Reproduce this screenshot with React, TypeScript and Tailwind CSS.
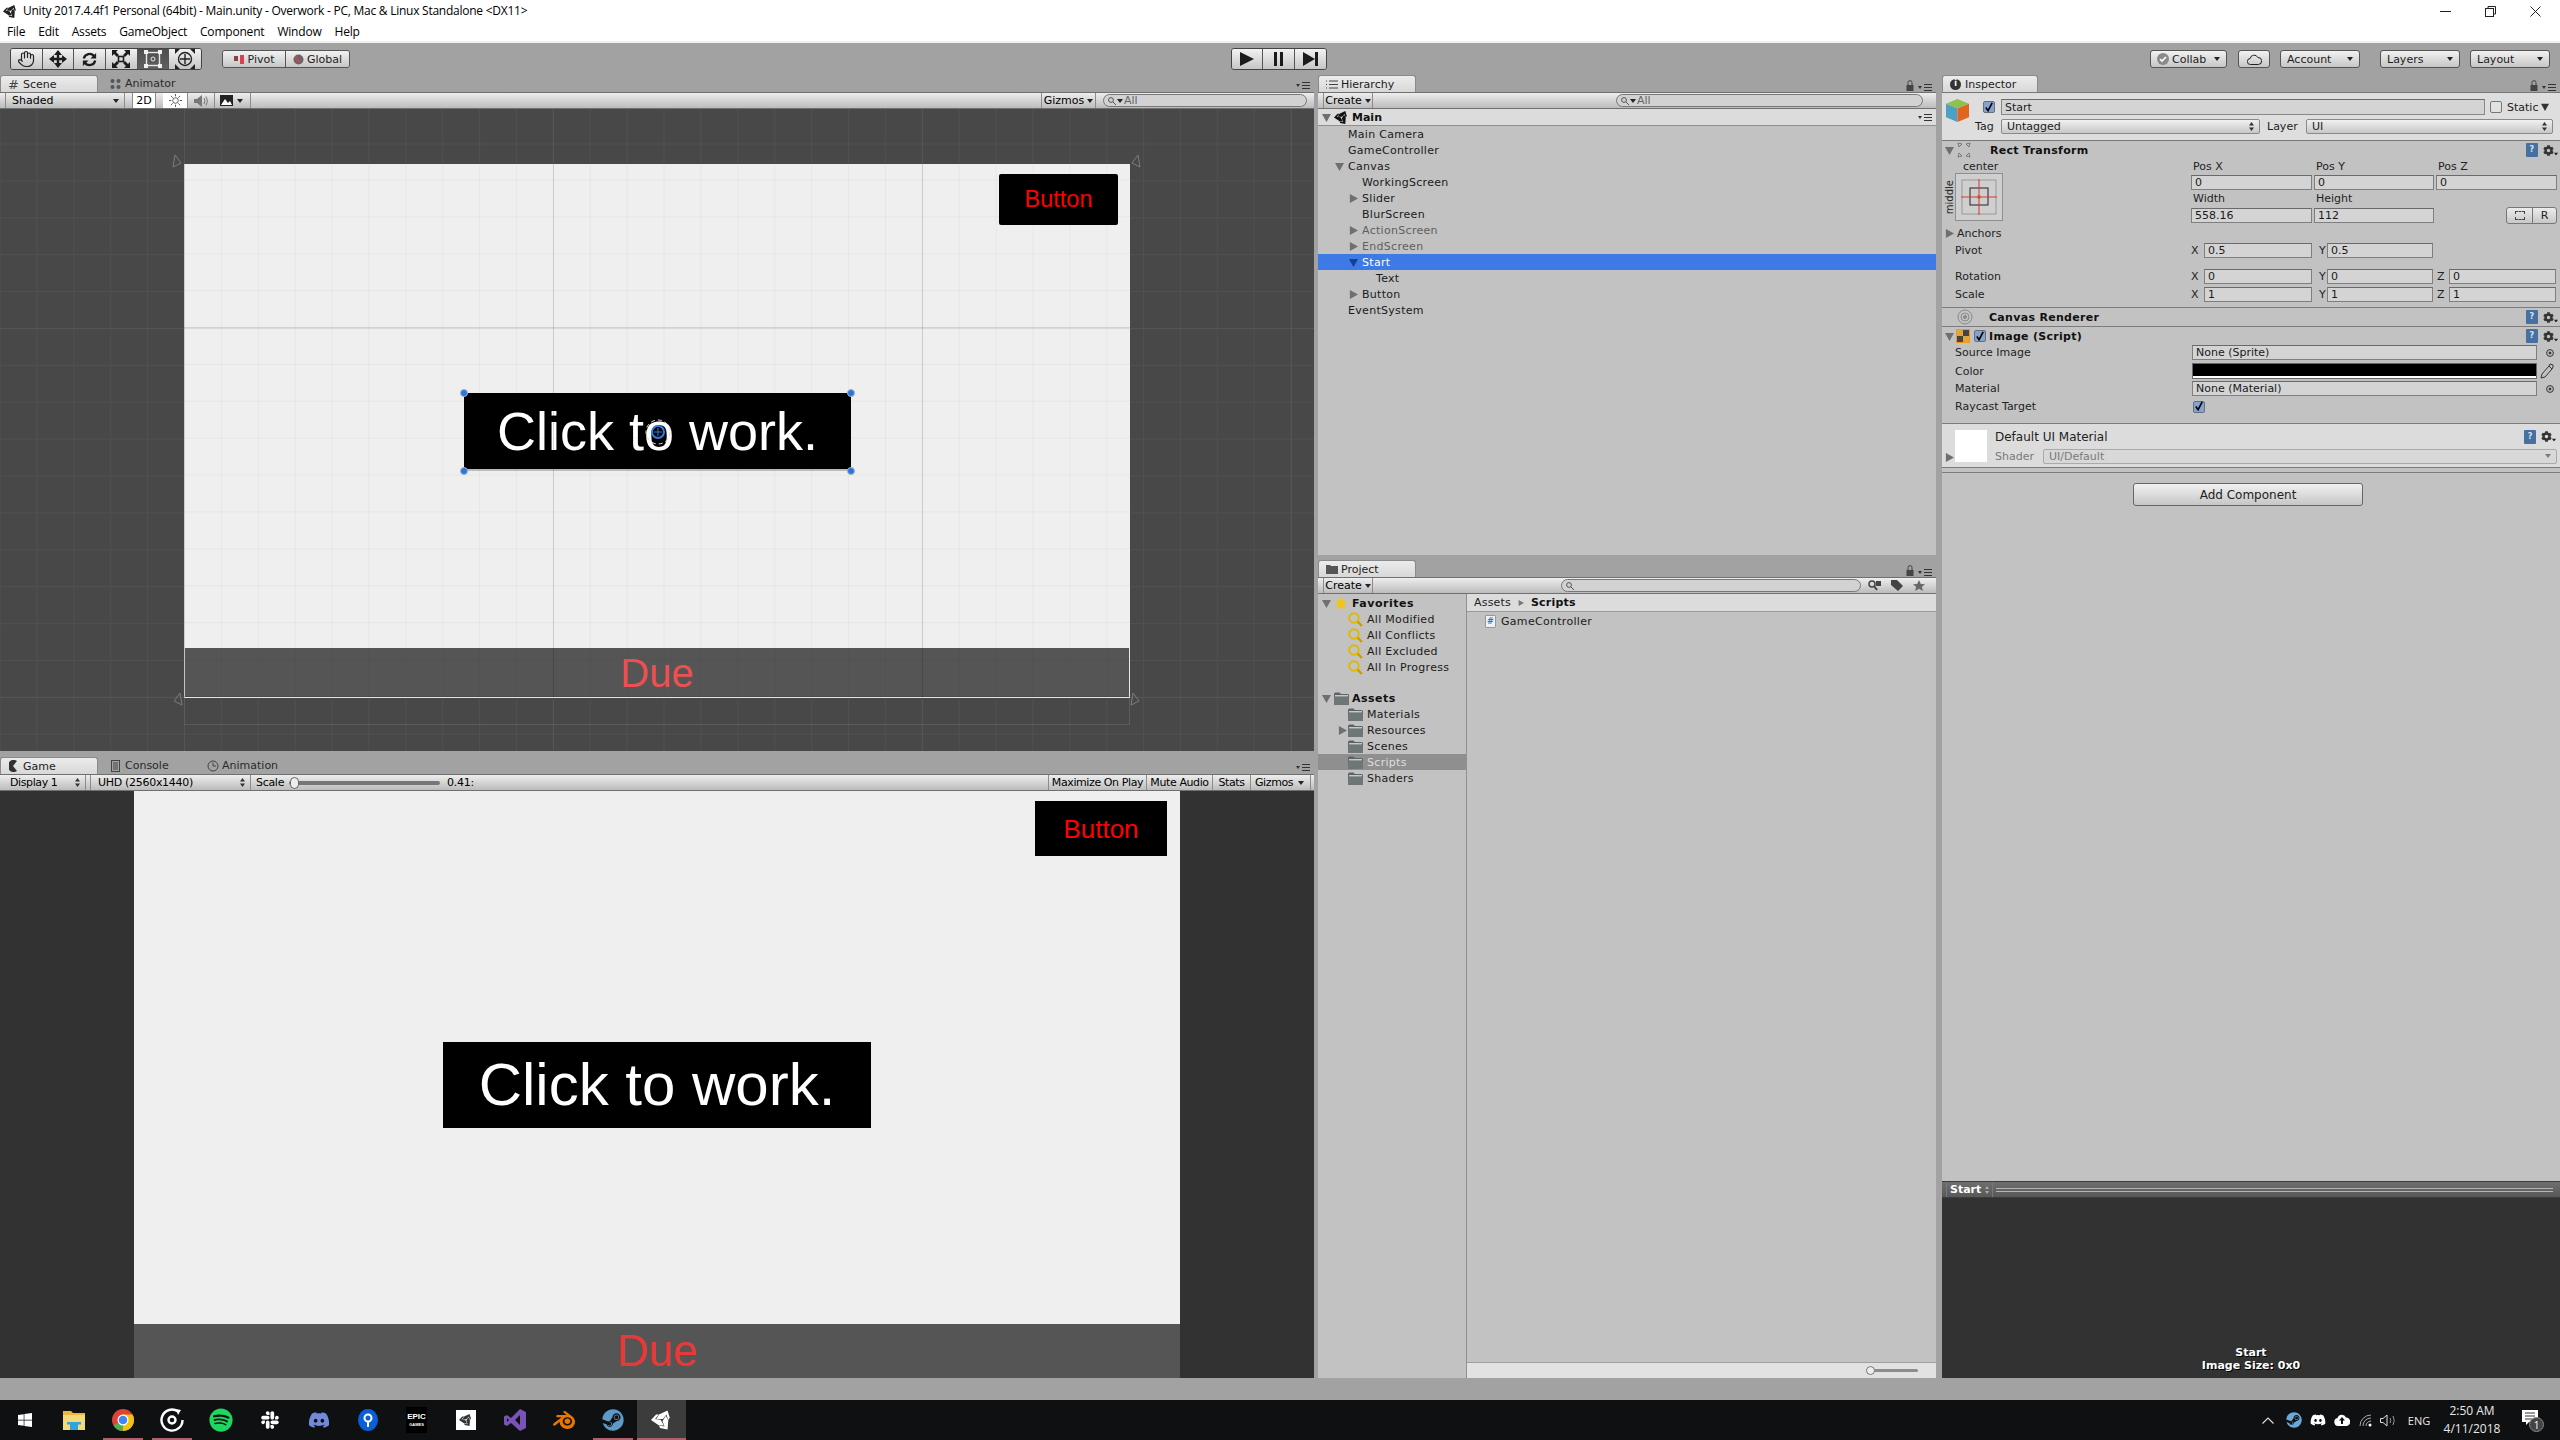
import { ReactNode } from "react";
import { FaCog, FaDiscord, FaSlack, FaSpotify, FaSteam, FaWindows } from "react-icons/fa";
import { SiBlender } from "react-icons/si";

const UnityLogo = ({ size = 16, color = "#fff" }: { size?: number; color?: string }) => (
  <svg width={size} height={size} viewBox="0 0 24 24" fill={color} className="shrink-0">
    {[0, 120, 240].map((a) => (
      <path key={a} transform={`rotate(${a} 12 12)`} d="M18 1.5L20.500 9.500L18.800 12L16.800 6L13 10.800H5.800L8.800 6Z" />
    ))}
  </svg>
);

const Arrow = ({ dir = "down", color = "#6f6f6f", size = 9 }: { dir?: "down" | "right"; color?: string; size?: number }) => (
  <svg width={size} height={size} viewBox="0 0 10 10" className="shrink-0">
    <polygon points={dir === "down" ? "0,1 10,1 5,10" : "1,0 10,5 1,10"} fill={color} />
  </svg>
);

const Caret = ({ className = "" }: { className?: string }) => (
  <svg width="6" height="4" viewBox="0 0 6 4" className={"shrink-0 " + className}>
    <polygon points="0,0 6,0 3,4" fill="#222" />
  </svg>
);

const UpDown = () => (
  <svg width="5" height="9" viewBox="0 0 5 9" className="shrink-0">
    <polygon points="2.5,0 5,3.5 0,3.5" fill="#333" />
    <polygon points="2.5,9 5,5.5 0,5.5" fill="#333" />
  </svg>
);

const PaneMenu = () => (
  <svg width="14" height="8" viewBox="0 0 14 8" className="shrink-0">
    <polygon points="0,3 4,3 2,6" fill="#333" />
    <path d="M6 1.5h8M6 4.5h8M6 7.5h8" stroke="#333" strokeWidth="1" />
  </svg>
);

const Lock = () => (
  <svg width="8" height="11" viewBox="0 0 8 11" className="shrink-0">
    <path d="M2 5V2.6a2 2 0 0 1 4 0V5" fill="none" stroke="#444" strokeWidth="1" />
    <rect x="0.5" y="5" width="7" height="6" fill="#444" />
  </svg>
);

const Tab = ({ label, icon, active, width = 98 }: { label: string; icon: ReactNode; active?: boolean; width?: number }) => (
  <div
    className={
      "flex h-[17px] items-center gap-[3px] rounded-t-[3px] pl-[6px] " +
      (active ? "bg-linear-to-b from-[#ececec] to-[#d8d8d8] border-x border-t border-[#8a8a8a]" : "")
    }
    style={{ width }}
  >
    <span className="flex w-[13px] justify-center">{icon}</span>
    <span className={active ? "text-[#1c1c1c]" : "text-[#2a2a2a]"}>{label}</span>
  </div>
);

const TabRow = ({ children, lock }: { children: ReactNode; lock?: boolean }) => (
  <div className="flex h-[17px] items-center justify-between pr-[4px]">
    <div className="flex items-center">{children}</div>
    <div className="flex items-end gap-[4px] pt-[3px]">
      {lock && <Lock />}
      <PaneMenu />
    </div>
  </div>
);

const StripButton = ({ children, className = "" }: { children: ReactNode; className?: string }) => (
  <div className={"flex h-full items-center border-r border-[#8c8c8c] " + className}>{children}</div>
);

const Strip = ({ children, className = "" }: { children: ReactNode; className?: string }) => (
  <div className={"flex h-[17px] items-stretch border-y border-[#707070] bg-linear-to-b from-[#eeeeee] to-[#bcbcbc] " + className}>
    {children}
  </div>
);

const Search = ({ width, label = true, marginLeft = 0 }: { width: number; label?: boolean; marginLeft?: number }) => (
  <div
    className="my-auto flex h-[13px] items-center gap-[1px] rounded-full border border-[#777] bg-[#d2d2d2] pl-[4px] text-[#666]"
    style={{ width, marginLeft }}
  >
    <svg width="8" height="8" viewBox="0 0 8 8" className="shrink-0">
      <circle cx="3" cy="3" r="2.4" fill="none" stroke="#555" />
      <path d="M5 5l3 3" stroke="#555" />
    </svg>
    {label && <span className="flex items-center gap-[1px]"><Caret />All</span>}
  </div>
);

const ToolGroupButton = ({ children, dark, w = 32 }: { children: ReactNode; dark?: boolean; w?: number }) => (
  <div
    className={
      "flex h-full items-center justify-center border-r border-[#555] last:border-r-0 " +
      (dark ? "bg-linear-to-b from-[#4e4e4e] to-[#606060]" : "bg-linear-to-b from-[#f2f2f2] to-[#c6c6c6]")
    }
    style={{ width: w }}
  >
    {children}
  </div>
);

const ToolbarButton = ({ children, width, marginLeft }: { children: ReactNode; width: number; marginLeft: number }) => (
  <div
    className="flex h-[18px] items-center justify-between rounded-[3px] border border-[#555] bg-linear-to-b from-[#f2f2f2] to-[#c6c6c6] px-[6px] text-[#1c1c1c]"
    style={{ width, marginLeft }}
  >
    {children}
  </div>
);

const HandIcon = () => (
  <svg width="18" height="18" viewBox="0 0 24 24" fill="none" stroke="#222" strokeWidth="1.6" strokeLinecap="round" strokeLinejoin="round">
    <path d="M18 11V6a2 2 0 0 0-4 0M14 10V4a2 2 0 0 0-4 0v2M10 10.5V6a2 2 0 0 0-4 0v8" />
    <path d="M18 8a2 2 0 1 1 4 0v6a8 8 0 0 1-8 8h-2c-2.8 0-4.5-.9-6-2.4L2.4 16a2 2 0 0 1 2.8-2.8L7 15" />
  </svg>
);

const MoveIcon = () => (
  <svg width="18" height="18" viewBox="0 0 18 18" fill="#1c1c1c">
    <polygon points="9,0 13,5 10.2,5 10.2,7.8 13,7.8 13,5 18,9 13,13 13,10.2 10.2,10.2 10.2,13 13,13 9,18 5,13 7.8,13 7.8,10.2 5,10.2 5,13 0,9 5,5 5,7.8 7.8,7.8 7.8,5 5,5" />
  </svg>
);

const RotateIcon = () => (
  <svg width="17" height="17" viewBox="0 0 18 18" fill="none" stroke="#1c1c1c" strokeWidth="2.4">
    <path d="M3 8a6 6 0 0 1 11-2" />
    <path d="M15 10a6 6 0 0 1-11 2" />
    <polygon points="16,2 16,8 10,8" fill="#1c1c1c" stroke="none" />
    <polygon points="2,16 2,10 8,10" fill="#1c1c1c" stroke="none" />
  </svg>
);

const ScaleIcon = () => (
  <svg width="18" height="18" viewBox="0 0 18 18" fill="#1c1c1c">
    <rect x="6.5" y="6.5" width="5" height="5" fill="none" stroke="#1c1c1c" strokeWidth="1.6" />
    <polygon points="0,0 6,0 4,2 7,5 5,7 2,4 0,6" />
    <polygon points="18,0 12,0 14,2 11,5 13,7 16,4 18,6" />
    <polygon points="0,18 6,18 4,16 7,13 5,11 2,14 0,12" />
    <polygon points="18,18 12,18 14,16 11,13 13,11 16,14 18,12" />
  </svg>
);

const RectToolIcon = () => (
  <svg width="18" height="18" viewBox="0 0 18 18" fill="none">
    <rect x="2.5" y="2.5" width="13" height="13" stroke="#e8e8e8" strokeWidth="1.4" />
    <rect x="0" y="0" width="4" height="4" fill="#f0f0f0" />
    <rect x="14" y="0" width="4" height="4" fill="#f0f0f0" />
    <rect x="0" y="14" width="4" height="4" fill="#f0f0f0" />
    <rect x="14" y="14" width="4" height="4" fill="#f0f0f0" />
    <circle cx="9" cy="9" r="2" stroke="#e8e8e8" />
  </svg>
);

const TransformIcon = () => (
  <svg width="20" height="20" viewBox="0 0 20 20" fill="none" stroke="#222" strokeWidth="1.4">
    <circle cx="10" cy="10" r="6.5" />
    <path d="M10 5v10M5 10h10" />
    <polygon points="0,0 5,0 0,5" fill="#222" stroke="none" />
    <polygon points="20,0 15,0 20,5" fill="#222" stroke="none" />
    <polygon points="0,20 5,20 0,15" fill="#222" stroke="none" />
    <polygon points="20,20 15,20 20,15" fill="#222" stroke="none" />
  </svg>
);

const Toolbar = () => (
  <div className="flex h-[32px] items-center bg-[#a2a2a2] pl-[10px]">
    <div className="flex h-[22px] w-[192px] overflow-hidden rounded-[3px] border border-[#444]">
      <ToolGroupButton><HandIcon /></ToolGroupButton>
      <ToolGroupButton><MoveIcon /></ToolGroupButton>
      <ToolGroupButton><RotateIcon /></ToolGroupButton>
      <ToolGroupButton><ScaleIcon /></ToolGroupButton>
      <ToolGroupButton dark><RectToolIcon /></ToolGroupButton>
      <ToolGroupButton><TransformIcon /></ToolGroupButton>
    </div>
    <div className="ml-[20px] flex h-[18px] w-[128px] overflow-hidden rounded-[3px] border border-[#555] text-[#1c1c1c]">
      <ToolGroupButton w={64}>
        <span className="flex items-center gap-[3px]">
          <svg width="11" height="9" viewBox="0 0 11 9"><rect y="1" width="4" height="5" fill="#8c3f45" /><rect x="6" width="4" height="9" fill="#d8414f" /></svg>
          Pivot
        </span>
      </ToolGroupButton>
      <ToolGroupButton w={64}>
        <span className="flex items-center gap-[3px]">
          <svg width="11" height="11" viewBox="0 0 11 11"><circle cx="5.5" cy="5.5" r="5" fill="#666" /><path d="M3 2v5h5" stroke="#d8414f" strokeWidth="1.4" fill="none" /></svg>
          Global
        </span>
      </ToolGroupButton>
    </div>
    <div className="ml-[881px] flex h-[22px] w-[96px] overflow-hidden rounded-[3px] border border-[#444]">
      <ToolGroupButton w={31}>
        <svg width="14" height="14" viewBox="0 0 14 14"><polygon points="0,0 14,7 0,14" fill="#1c1c1c" /></svg>
      </ToolGroupButton>
      <ToolGroupButton w={32}>
        <svg width="10" height="14" viewBox="0 0 10 14"><rect width="3" height="14" fill="#1c1c1c" /><rect x="6" width="3" height="14" fill="#1c1c1c" /></svg>
      </ToolGroupButton>
      <ToolGroupButton w={31}>
        <svg width="16" height="14" viewBox="0 0 16 14"><polygon points="0,0 12,7 0,14" fill="#1c1c1c" /><rect x="12" width="3" height="14" fill="#1c1c1c" /></svg>
      </ToolGroupButton>
    </div>
    <ToolbarButton width={77} marginLeft={823}>
      <span className="flex items-center gap-[3px]">
        <svg width="12" height="12" viewBox="0 0 12 12"><circle cx="6" cy="6" r="6" fill="#8a8a8a" /><path d="M3 6l2 2 4-4" stroke="#fff" strokeWidth="1.6" fill="none" /></svg>
        Collab
      </span>
      <Caret />
    </ToolbarButton>
    <div className="ml-[11px] flex h-[18px] w-[32px] items-center justify-center rounded-[3px] border border-[#555] bg-linear-to-b from-[#f2f2f2] to-[#c6c6c6]">
      <svg width="15" height="11" viewBox="0 0 15 11" fill="none" stroke="#222"><path d="M3.5 10.5a3 3 0 0 1-.3-6 4 4 0 0 1 7.6-1 3.5 3.5 0 0 1 .7 7z" /></svg>
    </div>
    <ToolbarButton width={80} marginLeft={10}>Account<Caret /></ToolbarButton>
    <ToolbarButton width={80} marginLeft={20}>Layers<Caret /></ToolbarButton>
    <ToolbarButton width={80} marginLeft={10}>Layout<Caret /></ToolbarButton>
  </div>
);

const Gizmo = ({ className, flip }: { className: string; flip?: boolean }) => (
  <svg width="11" height="14" viewBox="0 0 11 14" className={"absolute " + className}>
    <polygon points={flip ? "10,13 2,9 8,1" : "1,13 9,9 3,1"} fill="none" stroke="#7d7d7d" />
  </svg>
);

const Handle = ({ className }: { className: string }) => (
  <span className={"absolute h-[8px] w-[8px] rounded-full border border-[#9db4d0] bg-[#2b74dc] " + className} />
);

const SceneCanvas = () => (
  <div className="relative h-full bg-[#45474a]">
    <div className="absolute inset-0 bg-[#484848] bg-[linear-gradient(to_right,#555_1px,transparent_1px),linear-gradient(to_bottom,#555_1px,transparent_1px),linear-gradient(to_right,#505050_1px,transparent_1px),linear-gradient(to_bottom,#505050_1px,transparent_1px)] bg-[size:369px_369px,369px_369px,36.9px_36.9px,36.9px_36.9px] bg-[position:184px_0,0_219px,36.4px_0,0_34.5px]" />
    {/* canvas rect in world space */}
    <div className="absolute left-[184px] top-[55px] h-[534px] w-[946px] bg-[#efefef]">
      <div className="absolute left-[815px] top-[10px] flex h-[51px] w-[119px] items-center justify-center rounded-[2px] bg-black text-[23.5px] text-[#ff0000] [font-family:'Liberation_Sans',sans-serif]">
        Button
      </div>
      <div className="absolute left-[280px] top-[229px] flex h-[78px] w-[387px] items-center justify-center border-b-2 border-[#bbb] bg-black text-[54px] text-white [font-family:'Liberation_Sans',sans-serif]">
        Click to work.
      </div>
      <div className="absolute bottom-0 left-0 flex h-[50px] w-full items-center justify-center border-x border-b border-x-[#e8e8e8] border-b-white bg-[#555] text-[40px] text-[#ee4f52] [font-family:'Liberation_Sans',sans-serif]">
        Due
      </div>
      <div className="absolute inset-0 bg-[linear-gradient(to_right,rgba(0,0,0,0.12)_1px,transparent_1px),linear-gradient(to_bottom,rgba(0,0,0,0.09)_2px,transparent_2px),linear-gradient(to_right,rgba(0,0,0,0.035)_1px,transparent_1px),linear-gradient(to_bottom,rgba(0,0,0,0.035)_1px,transparent_1px)] bg-[size:369px_369px,369px_369px,36.9px_36.9px,36.9px_36.9px] bg-[position:0_0,0_163px,0_0,0_15.4px]" />
      <Handle className="left-[276px] top-[225px]" />
      <Handle className="left-[663px] top-[225px]" />
      <Handle className="left-[276px] top-[303px]" />
      <Handle className="left-[663px] top-[303px]" />
      <svg width="30" height="30" viewBox="0 0 30 30" className="absolute left-[459px] top-[253px]" fill="none">
        <circle cx="15" cy="15" r="12" stroke="#ddd" strokeWidth="1" strokeDasharray="4 3" />
        <circle cx="15" cy="15" r="6" stroke="#2f7ee0" strokeWidth="2" />
        <path d="M15 11v8M11 15h8" stroke="#2f7ee0" strokeWidth="1" />
      </svg>
    </div>
    <div className="absolute left-[184px] top-[589px] h-[27px] w-[946px] border-x border-b border-[#5c5c5c]" />
    <Gizmo className="left-[172px] top-[45px]" />
    <Gizmo className="left-[1130px] top-[45px]" flip />
    <Gizmo className="left-[172px] top-[583px]" flip />
    <Gizmo className="left-[1130px] top-[583px]" />
  </div>
);

const SceneView = () => (
  <div className="flex h-[676px] flex-col">
    <TabRow>
      <Tab active label="Scene" icon={<span className="text-[13px] leading-none text-[#444]">#</span>} />
      <div className="ml-[5px]">
        <Tab width={80} label="Animator" icon={
          <svg width="11" height="12" viewBox="0 0 11 12" fill="#555"><circle cx="2.5" cy="3" r="2" /><circle cx="8.5" cy="3" r="2" /><circle cx="2.5" cy="9" r="2" /><circle cx="8.5" cy="9" r="2" /></svg>
        } />
      </div>
    </TabRow>
    <Strip>
      <StripButton className="ml-[5px] w-[120px] justify-between border-l border-l-[#8c8c8c] pl-[6px] pr-[5px]">Shaded<Caret /></StripButton>
      <StripButton className="ml-[7px] w-[24px] justify-center border-l border-l-[#8c8c8c] bg-white">2D</StripButton>
      <StripButton className="ml-[7px] w-[25px] justify-center bg-white">
        <svg width="13" height="13" viewBox="0 0 14 14" fill="none" stroke="#555"><circle cx="7" cy="7" r="3" /><path d="M7 0v2.5M7 11.5V14M0 7h2.5M11.5 7H14M2 2l2 2M10 10l2 2M12 2l-2 2M4 10l-2 2" /></svg>
      </StripButton>
      <StripButton className="w-[27px] justify-center">
        <svg width="14" height="12" viewBox="0 0 14 12"><polygon points="0,4 3,4 8,0 8,12 3,8 0,8" fill="#777" /><path d="M10 3q2 3 0 6M12 1.5q3 4.5 0 9" stroke="#777" fill="none" /></svg>
      </StripButton>
      <StripButton className="w-[36px] justify-center gap-[4px] pr-[2px]">
        <svg width="13" height="11" viewBox="0 0 13 11"><rect width="13" height="11" fill="#222" /><polygon points="1,10 5,4 8,8 10,6 12,10" fill="#fff" /></svg>
        <Caret />
      </StripButton>
      <div className="w-[790px]" />
      <StripButton className="w-[55px] justify-center gap-[3px] border-l border-l-[#8c8c8c]">Gizmos<Caret /></StripButton>
      <Search width={204} marginLeft={7} />
    </Strip>
    <div className="min-h-0 flex-1">
      <SceneCanvas />
    </div>
  </div>
);

const GameView = () => (
  <div className="flex h-[621px] flex-col">
    <TabRow>
      <Tab active label="Game" icon={
        <svg width="9" height="12" viewBox="0 0 9 12"><path d="M8 1a6 6 0 1 0 0 10L4 6z" fill="#333" /></svg>
      } />
      <div className="ml-[5px]"><Tab width={97} label="Console" icon={
        <svg width="9" height="12" viewBox="0 0 9 12" fill="none" stroke="#444"><rect x="0.5" y="0.5" width="8" height="11" /><path d="M2 3h5M2 5h5M2 7h5M2 9h5" /></svg>
      } /></div>
      <Tab width={100} label="Animation" icon={
        <svg width="12" height="12" viewBox="0 0 12 12" fill="none" stroke="#444"><circle cx="6" cy="6" r="5" /><path d="M6 2.5V6h3" /></svg>
      } />
    </TabRow>
    <Strip>
      <StripButton className="w-[86px] justify-between pl-[10px] pr-[5px] tracking-[-0.4px]">Display 1<UpDown /></StripButton>
      <StripButton className="ml-[4px] w-[161px] justify-between border-l border-l-[#8c8c8c] pl-[7px] pr-[5px] tracking-[-0.3px]">UHD (2560x1440)<UpDown /></StripButton>
      <div className="ml-[5px] flex w-[219px] items-center tracking-[-0.3px]">
        Scale
        <div className="relative ml-[5px] h-[4px] w-[151px] rounded-full bg-[#777]">
          <span className="absolute left-[1px] top-[-4px] h-[12px] w-[9px] rounded-full border border-[#666] bg-[#eee]" />
        </div>
        <span className="ml-[7px]">0.41:</span>
      </div>
      <div className="w-[573px]" />
      <StripButton className="w-[99px] justify-center border-l border-l-[#8c8c8c] tracking-[-0.4px]">Maximize On Play</StripButton>
      <StripButton className="w-[66px] justify-center tracking-[-0.4px]">Mute Audio</StripButton>
      <StripButton className="w-[38px] justify-center tracking-[-0.4px]">Stats</StripButton>
      <StripButton className="w-[60px] justify-between pl-[4px] pr-[6px] tracking-[-0.4px]">Gizmos<Caret /></StripButton>
    </Strip>
    <div className="flex min-h-0 flex-1 justify-center bg-[#323232]">
      <div className="relative flex h-full w-[1046px] flex-col bg-[#efefef] [font-family:'Liberation_Sans',sans-serif]">
        <div className="flex justify-end pr-[13px] pt-[10px]">
          <div className="flex h-[55px] w-[132px] items-center justify-center bg-black text-[26px] text-[#ff0000]">Button</div>
        </div>
        <div className="mt-[186px] flex justify-center">
          <div className="flex h-[86px] w-[428px] items-center justify-center bg-black text-[60px] text-white">Click to work.</div>
        </div>
        <div className="mt-auto flex h-[54px] items-center justify-center bg-[#555] text-[44px] text-[#e83838]">Due</div>
      </div>
    </div>
  </div>
);

const TreeRow = ({ label, indent, arrow, muted, selected }: { label: string; indent: number; arrow?: "down" | "right"; muted?: boolean; selected?: boolean }) => (
  <div
    className={"flex h-[16px] items-center tracking-[0.3px] " + (selected ? "bg-[#3d7ae5] text-white" : muted ? "text-[#5f5f5f]" : "text-[#1a1a1a]")}
    style={{ paddingLeft: indent - 13 }}
  >
    <span className="mr-[4px] flex w-[9px] justify-center">
      {arrow && <Arrow dir={arrow} color={selected ? "#163f8c" : "#6f6f6f"} />}
    </span>
    {label}
  </div>
);

const Hierarchy = () => (
  <div className="flex h-[480px] flex-col">
    <TabRow lock>
      <Tab active label="Hierarchy" icon={
        <svg width="12" height="9" viewBox="0 0 12 9" stroke="#444"><path d="M3 1h9M3 4.5h9M3 8h9M0 1h1M0 4.5h1M0 8h1" /></svg>
      } />
    </TabRow>
    <Strip>
      <StripButton className="ml-[5px] w-[50px] justify-center gap-[3px] border-l border-l-[#8c8c8c]">Create<Caret /></StripButton>
      <Search width={307} marginLeft={243} />
    </Strip>
    <div className="min-h-0 flex-1 bg-[#c2c2c2]">
      <div className="flex h-[17px] items-center justify-between border-b border-[#8f8f8f] bg-[#dcdcdc] pl-[4px] pr-[4px] font-bold text-[#111]">
        <span className="flex items-center gap-[3px]">
          <Arrow />
          <UnityLogo size={15} color="#111" />
          Main
        </span>
        <PaneMenu />
      </div>
      <TreeRow label="Main Camera" indent={30} />
      <TreeRow label="GameController" indent={30} />
      <TreeRow label="Canvas" indent={30} arrow="down" />
      <TreeRow label="WorkingScreen" indent={44} />
      <TreeRow label="Slider" indent={44} arrow="right" />
      <TreeRow label="BlurScreen" indent={44} />
      <TreeRow label="ActionScreen" indent={44} arrow="right" muted />
      <TreeRow label="EndScreen" indent={44} arrow="right" muted />
      <TreeRow label="Start" indent={44} arrow="down" selected />
      <TreeRow label="Text" indent={58} />
      <TreeRow label="Button" indent={44} arrow="right" />
      <TreeRow label="EventSystem" indent={30} />
    </div>
  </div>
);

const Folder = () => (
  <svg width="15" height="13" viewBox="0 0 15 13" className="shrink-0">
    <path d="M0 2q0-1.5 1.5-1.5h4L7 2h6.500Q15 2 15 3.500V12q0 1-1 1H1q-1 0-1-1z" fill="#5e6466" />
    <rect x="1" y="3" width="13" height="1.5" fill="#c8c8c8" />
    <rect x="0" y="5" width="15" height="8" rx="1" fill="#6f7678" />
  </svg>
);

const SearchFolder = () => (
  <svg width="15" height="15" viewBox="0 0 15 15" fill="none" className="shrink-0">
    <circle cx="6" cy="6" r="4.8" stroke="#e0b800" strokeWidth="2" />
    <path d="M9.5 9.5L14 14" stroke="#c89f00" strokeWidth="2.4" />
  </svg>
);

const ProjectRow = ({ icon, label, active, arrow }: { icon: ReactNode; label: string; active?: boolean; arrow?: boolean }) => (
  <div className={"flex h-[16px] items-center pl-[18px] tracking-[0.3px] " + (active ? "bg-[#8f8f8f] text-[#dedede]" : "text-[#1a1a1a]")}>
    <span className="flex w-[12px] justify-center">{arrow && <Arrow dir="right" />}</span>
    <span className="flex w-[19px]">{icon}</span>
    {label}
  </div>
);

const ProjectHead = ({ icon, label }: { icon: ReactNode; label: string }) => (
  <div className="flex h-[16px] items-center gap-[3px] pl-[4px] font-bold tracking-[0.5px] text-[#111]">
    <Arrow />
    <span className="flex w-[15px]">{icon}</span>
    {label}
  </div>
);

const Project = () => (
  <div className="flex h-[818px] flex-col">
    <TabRow lock>
      <Tab active label="Project" icon={
        <svg width="12" height="10" viewBox="0 0 12 10" fill="#555"><path d="M0 1h4l1 1h7v8H0z" /></svg>
      } />
    </TabRow>
    <Strip>
      <StripButton className="ml-[5px] w-[50px] justify-center gap-[3px] border-l border-l-[#8c8c8c]">Create<Caret /></StripButton>
      <Search width={300} label={false} marginLeft={188} />
      <div className="ml-[7px] flex items-center gap-[10px]">
        <svg width="13" height="11" viewBox="0 0 13 11" fill="#444"><circle cx="4" cy="4" r="3" fill="none" stroke="#444" strokeWidth="1.5" /><path d="M6 6l3 4" stroke="#444" strokeWidth="2" /><rect x="8" y="1" width="5" height="5" /></svg>
        <svg width="12" height="11" viewBox="0 0 12 11" fill="#444"><polygon points="0,0 6,0 12,6 7,11 0,5" /></svg>
        <svg width="12" height="11" viewBox="0 0 12 11" fill="#666"><polygon points="6,0 7.8,4 12,4.2 8.8,7 10,11 6,8.8 2,11 3.2,7 0,4.2 4.2,4" /></svg>
      </div>
    </Strip>
    <div className="flex min-h-0 flex-1 bg-[#c2c2c2]">
      <div className="w-[149px] shrink-0 border-r border-[#909090] pt-[1px]">
        <ProjectHead label="Favorites" icon={
          <svg width="14" height="14" viewBox="0 0 12 12" fill="#f2c618"><polygon points="6,0 7.8,4 12,4.4 8.8,7.2 9.8,12 6,9.5 2.2,12 3.2,7.2 0,4.4 4.2,4" /></svg>
        } />
        <ProjectRow icon={<SearchFolder />} label="All Modified" />
        <ProjectRow icon={<SearchFolder />} label="All Conflicts" />
        <ProjectRow icon={<SearchFolder />} label="All Excluded" />
        <ProjectRow icon={<SearchFolder />} label="All In Progress" />
        <div className="h-[15px]" />
        <ProjectHead label="Assets" icon={<Folder />} />
        <ProjectRow icon={<Folder />} label="Materials" />
        <ProjectRow icon={<Folder />} label="Resources" arrow />
        <ProjectRow icon={<Folder />} label="Scenes" />
        <ProjectRow icon={<Folder />} label="Scripts" active />
        <ProjectRow icon={<Folder />} label="Shaders" />
      </div>
      <div className="flex min-w-0 flex-1 flex-col">
        <div className="flex h-[18px] items-center gap-[7px] border-b border-[#9a9a9a] bg-[#dcdcdc] pl-[7px] tracking-[0.2px] text-[#222]">
          Assets
          <Arrow dir="right" size={6} color="#777" />
          <span className="font-bold text-[#111]">Scripts</span>
        </div>
        <div className="flex h-[19px] items-center gap-[5px] pl-[18px] tracking-[0.3px] text-[#1a1a1a]">
          <span className="flex h-[13px] w-[11px] items-center justify-center rounded-[1px] border border-[#8a9aa8] bg-[#eef2f5] text-[8px] font-bold leading-none text-[#1f7fbf]">#</span>
          GameController
        </div>
        <div className="mt-auto flex h-[16px] items-center justify-end border-t border-[#a0a0a0] bg-[#e2e2e2] pr-[18px]">
          <div className="relative h-[3px] w-[52px] rounded-full bg-[#8d8d8d]">
            <span className="absolute left-0 top-[-3px] h-[9px] w-[9px] rounded-full border border-[#777] bg-[#eee]" />
          </div>
        </div>
      </div>
    </div>
  </div>
);

const Field = ({ value, width, className = "" }: { value: string; width: number; className?: string }) => (
  <div
    className={"flex h-[15px] shrink-0 items-center border border-[#7f7f7f] border-t-[#6a6a6a] bg-[#d4d4d4] pl-[3px] text-[#1a1a1a] " + className}
    style={{ width }}
  >
    {value}
  </div>
);

const Check = ({ className = "" }: { className?: string }) => (
  <span className={"flex h-[12px] w-[12px] shrink-0 items-center justify-center rounded-[2px] border border-[#66707c] bg-[#84a3d0] " + className}>
    <svg width="11" height="11" viewBox="0 0 11 11" fill="none"><path d="M2 5.5L4.5 9L9 0.5" stroke="#000" strokeWidth="1.8" /></svg>
  </span>
);

const CompTools = () => (
  <div className="ml-auto flex items-center gap-[5px]">
    <span className="flex h-[14px] w-[12px] items-center justify-center rounded-[1px] bg-[#46709f] text-[8px] font-bold leading-none text-[#d8e4f0]">?</span>
    <span className="flex items-end">
      <FaCog size={11} color="#333" />
      <Caret className="ml-[-1px] scale-75" />
    </span>
  </div>
);

const Vec = ({ label, y, z, h = 15, mt = 0, x = "0" }: { label: string; x?: string; y: string; z?: string; h?: number; mt?: number }) => (
  <div className="flex items-center pl-[13px] text-[#222]" style={{ height: h, marginTop: mt }}>
    <span className="w-[236px]">{label}</span>
    <span className="w-[13px]">X</span>
    <Field value={x} width={108} />
    <span className="ml-[7px] w-[8px]">Y</span>
    <Field value={y} width={106} />
    {z && <span className="ml-[4px] w-[12px]">Z</span>}
    {z && <Field value={z} width={107} />}
  </div>
);

const ImageRow = ({ label, value, dot = true, mt = 3 }: { label: string; value: string; dot?: boolean; mt?: number }) => (
  <div className="flex h-[15px] items-center pl-[13px] text-[#222]" style={{ marginTop: mt }}>
    <span className="w-[237px]">{label}</span>
    <Field value={value} width={345} />
    {dot && (
      <svg width="8" height="8" viewBox="0 0 8 8" className="ml-[9px]" fill="none" stroke="#333"><circle cx="4" cy="4" r="3.4" /><circle cx="4" cy="4" r="1" fill="#333" /></svg>
    )}
  </div>
);

const Inspector = () => (
  <div className="flex h-full flex-col">
    <TabRow lock>
      <Tab active width={96} label="Inspector" icon={
        <span className="flex h-[11px] w-[11px] items-center justify-center rounded-full bg-[#333] text-[8px] font-bold leading-none text-white">i</span>
      } />
    </TabRow>
    <div className="h-[49px] border-y border-[#777] bg-[#dedede] pt-[6px] text-[#1c1c1c]">
      <div className="flex h-[16px] items-center pl-[4px]">
        <svg width="23" height="23" viewBox="0 0 24 24" className="mt-[6px] shrink-0">
          <polygon points="12,0 24,5 12,10 0,5" fill="#8fc14e" />
          <polygon points="0,5 12,10 12,24 0,19" fill="#4e9fc4" />
          <polygon points="24,5 12,10 12,24 24,19" fill="#e2651f" />
        </svg>
        <Check className="ml-[14px]" />
        <Field value="Start" width={484} className="ml-[6px] h-[16px] border-[#888]" />
        <span className="ml-[5px] h-[12px] w-[12px] rounded-[2px] border border-[#777] bg-[#e2e2e2]" />
        <span className="ml-[5px]">Static</span>
        <span className="ml-[3px]"><Arrow size={8} color="#333" /></span>
      </div>
      <div className="mt-[3px] flex h-[16px] items-center">
        <span className="ml-[33px] w-[26px]">Tag</span>
        <div className="flex h-[15px] w-[259px] items-center justify-between rounded-[2px] border border-[#8a8a8a] bg-linear-to-b from-[#f0f0f0] to-[#c8c8c8] px-[5px]">Untagged<UpDown /></div>
        <span className="ml-[7px] w-[39px]">Layer</span>
        <div className="flex h-[15px] w-[247px] items-center justify-between rounded-[2px] border border-[#8a8a8a] bg-linear-to-b from-[#f0f0f0] to-[#c8c8c8] px-[5px]">UI<UpDown /></div>
      </div>
    </div>
    <div className="min-h-0 flex-1 bg-[#c2c2c2]">
      <div className="flex h-[18px] items-center pl-[3px] pr-[1px] font-bold tracking-[0.3px] text-[#111]">
        <Arrow />
        <svg width="16" height="16" viewBox="0 0 16 16" className="ml-[2px]" fill="none" stroke="#777"><path d="M2 1l4 1-3 3zM14 1l-4 1 3 3zM2 15l4-1-3-3zM14 15l-4-1 3-3z" /></svg>
        <span className="ml-[18px]">Rect Transform</span>
        <CompTools />
      </div>
      <div className="flex">
        <div className="w-[249px] shrink-0 text-[#222]">
          <div className="flex h-[14px] items-center pl-[21px]">center</div>
          <div className="flex items-center pl-[3px]">
            <span className="w-[10px] text-[10px] leading-none [writing-mode:vertical-rl] rotate-180">middle</span>
            <div className="flex h-[48px] w-[48px] items-center justify-center border border-[#8f8f8f] bg-[#cfcfcf]">
              <svg width="36" height="36" viewBox="0 0 36 36" fill="none">
                <rect x="1" y="1" width="34" height="34" stroke="#999" />
                <rect x="9" y="9" width="18" height="17" stroke="#222" />
                <path d="M18 0v36M0 18h36" stroke="#d33" />
                <rect x="16.5" y="16.5" width="3" height="3" fill="#a06a10" />
              </svg>
            </div>
          </div>
        </div>
        <div className="text-[#222]">
          <div className="flex h-[14px] items-center pl-[2px]">
            <span className="w-[123px]">Pos X</span><span className="w-[122px]">Pos Y</span><span>Pos Z</span>
          </div>
          <div className="mt-[2px] flex gap-[2px]">
            <Field value="0" width={121} />
            <Field value="0" width={120} />
            <Field value="0" width={121} />
          </div>
          <div className="flex h-[17px] items-center pl-[2px]">
            <span className="w-[123px]">Width</span><span>Height</span>
          </div>
          <div className="flex items-center gap-[2px]">
            <Field value="558.16" width={121} />
            <Field value="112" width={120} />
            <div className="ml-[70px] flex h-[17px] w-[51px] overflow-hidden rounded-[3px] border border-[#777] bg-linear-to-b from-[#ececec] to-[#c8c8c8]">
              <span className="flex w-[26px] items-center justify-center border-r border-[#777]">
                <span className="h-[9px] w-[10px] border border-dashed border-[#444]" />
              </span>
              <span className="flex flex-1 items-center justify-center">R</span>
            </div>
          </div>
        </div>
      </div>
      <div className="mt-[1px] flex h-[16px] items-center gap-[3px] pl-[3px] text-[#222]">
        <Arrow dir="right" /><span>Anchors</span>
      </div>
      <Vec label="Pivot" x="0.5" y="0.5" mt={2} />
      <Vec label="Rotation" y="0" z="0" mt={11} />
      <Vec label="Scale" x="1" y="1" z="1" mt={3} />
      <div className="mt-[5px] flex h-[19px] items-center border-t border-[#7c7c7c] pl-[15px] pr-[1px] font-bold tracking-[0.3px] text-[#111]">
        <svg width="16" height="16" viewBox="0 0 16 16" fill="none" stroke="#8a8a8a"><circle cx="8" cy="8" r="7" /><circle cx="8" cy="8" r="4" /><circle cx="8" cy="8" r="1.5" fill="#8a8a8a" /></svg>
        <span className="ml-[16px]">Canvas Renderer</span>
        <CompTools />
      </div>
      <div className="flex h-[19px] items-center border-t border-[#7c7c7c] pl-[3px] pr-[1px] font-bold tracking-[0.3px] text-[#111]">
        <Arrow />
        <span className="ml-[2px] grid h-[14px] w-[14px] grid-cols-2 border border-[#f09a1a]">
          <span className="bg-[#e2a43c]" /><span className="bg-[#444]" /><span className="bg-[#444]" /><span className="bg-[#e2a43c]" />
        </span>
        <Check className="ml-[4px]" />
        <span className="ml-[3px]">Image (Script)</span>
        <CompTools />
      </div>
      <ImageRow label="Source Image" value="None (Sprite)" mt={0} />
      <div className="mt-[3px] flex h-[16px] items-center pl-[13px] text-[#222]">
        <span className="w-[237px]">Color</span>
        <div className="flex h-[16px] w-[345px] flex-col border border-[#666] bg-white">
          <span className="h-[12px] bg-black" />
        </div>
        <svg width="14" height="16" viewBox="0 0 14 16" className="ml-[3px]" fill="none" stroke="#333"><path d="M1 15l1-4 7-8 3 3-7 8zM9 3l1-2 3 1v2l-1 2" /></svg>
      </div>
      <ImageRow label="Material" value="None (Material)" mt={2} />
      <div className="mt-[3px] flex h-[15px] items-center pl-[13px] text-[#222]">
        <span className="w-[238px]">Raycast Target</span>
        <Check />
      </div>
      <div className="mt-[9px] flex h-[45px] items-center border-y border-[#7c7c7c] bg-[#dcdcdc] pl-[13px] pr-[3px]">
        <div className="relative h-[32px] w-[32px] shrink-0 bg-white">
          <span className="absolute left-[-10px] top-[23px]"><Arrow dir="right" /></span>
        </div>
        <div className="ml-[8px] flex flex-1 flex-col">
          <div className="flex h-[18px] items-center text-[12px] text-[#222]">Default UI Material<CompTools /></div>
          <div className="mt-[3px] flex h-[15px] items-center text-[#7a7a7a]">
            <span className="w-[48px]">Shader</span>
            <div className="flex h-[15px] flex-1 items-center justify-between rounded-[2px] border border-[#aaa] bg-[#d8d8d8] px-[5px]">UI/Default<Caret className="opacity-50" /></div>
          </div>
        </div>
      </div>
      <div className="mt-[4px] h-[1px] bg-[#7c7c7c]" />
      <div className="mt-[10px] flex justify-center pr-[6px]">
        <div className="flex h-[23px] w-[230px] items-center justify-center rounded-[3px] border border-[#666] bg-linear-to-b from-[#f2f2f2] to-[#c6c6c6] text-[12px] text-[#222]">Add Component</div>
      </div>
    </div>
    <div className="flex h-[17px] items-stretch border-y border-[#3c3c3c] bg-linear-to-b from-[#6e6e6e] to-[#585858] pl-[4px] pr-[7px]">
      <div className="flex w-[47px] items-center justify-between border-x border-[#777] px-[3px] font-bold text-white">
        Start
        <svg width="4" height="8" viewBox="0 0 4 8"><polygon points="2,0 4,3 0,3" fill="#aaa" /><polygon points="2,8 4,5 0,5" fill="#aaa" /></svg>
      </div>
      <div className="ml-[3px] flex flex-1 flex-col justify-center gap-[2px]">
        <span className="h-[1px] bg-[#b5b5b5]" />
        <span className="h-[1px] bg-[#b5b5b5]" />
      </div>
    </div>
    <div className="flex h-[180px] flex-col items-center justify-end bg-[#323232] pb-[6px] font-bold leading-[13px] text-white [text-shadow:1px_1px_0_#000]">
      <span>Start</span>
      <span>Image Size: 0x0</span>
    </div>
  </div>
);

const TaskIcon = ({ children, active, running }: { children: ReactNode; active?: boolean; running?: boolean }) => (
  <div className={"relative flex h-[40px] w-[49px] items-center justify-center " + (active ? "bg-[#3c3c3c]" : "")}>
    {children}
    {running && <span className={"absolute bottom-0 h-[2px] bg-[#b0606a] " + (active ? "w-full" : "w-[40px]")} />}
  </div>
);

const Taskbar = () => (
  <div className="flex h-[40px] items-center bg-[#0f1012] text-[#e8e8e8] [font-family:'Open_Sans',sans-serif]">
    <div className="flex pl-[0px]">
      <TaskIcon><FaWindows size={16} color="#fff" /></TaskIcon>
      <TaskIcon>
        <svg width="22" height="20" viewBox="0 0 22 20"><path d="M0 1h8l2 2h12v4H0z" fill="#e8b93a" /><rect y="5" width="22" height="15" fill="#f6d878" /><rect x="4" y="12" width="14" height="2.5" fill="#2ea5dc" /><rect x="7" y="14" width="8" height="6" fill="#2ea5dc" /></svg>
      </TaskIcon>
      <TaskIcon running>
        <svg width="22" height="22" viewBox="0 0 22 22">
          <circle cx="11" cy="11" r="11" fill="#db4437" />
          <path d="M11 11L1.5 16.5A11 11 0 0 0 11 22 11 11 0 0 0 20.5 5.5z" fill="#4caf50" />
          <path d="M11 11L11 22A11 11 0 0 0 20.5 5.5H11z" fill="#f4c20d" />
          <circle cx="11" cy="11" r="5.5" fill="#fff" />
          <circle cx="11" cy="11" r="4.3" fill="#4285f4" />
        </svg>
      </TaskIcon>
      <TaskIcon running>
        <svg width="24" height="24" viewBox="0 0 24 24" fill="none" stroke="#fff"><path d="M18 3.5A10.5 10.5 0 1 0 22.5 12" strokeWidth="2.4" /><circle cx="12" cy="12" r="3.5" strokeWidth="2.4" /><polygon points="16,1 21,2 18,7" fill="#fff" stroke="none" /></svg>
      </TaskIcon>
      <TaskIcon>
        <span className="flex h-[24px] w-[24px] items-center justify-center"><FaSpotify size={24} color="#1ed760" /></span>
      </TaskIcon>
      <TaskIcon><FaSlack size={20} color="#fff" /></TaskIcon>
      <TaskIcon><FaDiscord size={22} color="#7289da" /></TaskIcon>
      <TaskIcon>
        <svg width="20" height="22" viewBox="0 0 20 22"><ellipse cx="10" cy="11" rx="10" ry="11" fill="#0a5ed8" /><circle cx="10" cy="9" r="3.5" fill="none" stroke="#fff" strokeWidth="2" /><rect x="9" y="12" width="2" height="6" fill="#fff" /></svg>
      </TaskIcon>
      <TaskIcon>
        <div className="flex h-[26px] w-[21px] flex-col items-center justify-center bg-[#000] font-bold leading-[8px] text-white [font-family:'Liberation_Sans',sans-serif]">
          <span className="text-[8px]">EPIC</span>
          <span className="mt-[1px] text-[4px] leading-[5px]">GAMES</span>
        </div>
      </TaskIcon>
      <TaskIcon>
        <div className="flex h-[20px] w-[20px] items-center justify-center bg-white"><UnityLogo size={14} color="#333" /></div>
      </TaskIcon>
      <TaskIcon>
        <svg width="24" height="24" viewBox="0 0 24 24" fill="#7a52b8"><path d="M17 1l6 3v16l-6 3-9-8-4 3-3-1.5V8.500L4 7l4 3zM17 7l-5 5 5 5zM4 10v4l2-2z" fillRule="evenodd" /></svg>
      </TaskIcon>
      <TaskIcon><SiBlender size={22} color="#ea7600" /></TaskIcon>
      <TaskIcon running><FaSteam size={22} color="#5e9ac8" /></TaskIcon>
      <TaskIcon active running><UnityLogo size={22} color="#fff" /></TaskIcon>
    </div>
    <div className="ml-auto flex items-center">
      <svg width="12" height="7" viewBox="0 0 12 7" fill="none" stroke="#ddd" strokeWidth="1.2"><path d="M0.5 6.5L6 1l5.5 5.5" /></svg>
      <span className="ml-[12px]"><FaSteam size={16} color="#6aa8d8" /></span>
      <span className="ml-[8px]"><FaDiscord size={16} color="#fff" /></span>
      <svg width="16" height="12" viewBox="0 0 16 12" className="ml-[8px]" fill="#fff"><path d="M4 12a4 4 0 0 1-.5-7.9 4.5 4.5 0 0 1 8.5-.6A4.2 4.2 0 0 1 12 12z" /><path d="M8 3l3 3.5H9V10H7V6.5H5z" fill="#0f1012" /></svg>
      <svg width="13" height="13" viewBox="0 0 13 13" className="ml-[9px]" fill="none" stroke="#aaa"><path d="M1 12A11 11 0 0 1 12 1M4 12a8 8 0 0 1 8-8M7 12a5 5 0 0 1 5-5" /><circle cx="11" cy="11" r="1.5" fill="#fff" stroke="none" /></svg>
      <svg width="16" height="13" viewBox="0 0 16 13" className="ml-[8px]" fill="none" stroke="#ddd"><path d="M0.5 4.5h2.5L7 1v11L3 8.5H0.500z" /><path d="M10 4q1.5 2.5 0 5M13 2q2.5 4.5 0 9" stroke="#999" /></svg>
      <span className="ml-[11px] w-[24px] text-center text-[11px]">ENG</span>
      <div className="ml-[11px] flex w-[60px] flex-col items-center text-[12px] leading-[18px]">
        <span>2:50 AM</span>
        <span>4/11/2018</span>
      </div>
      <div className="relative ml-[20px] mr-[20px] flex h-[20px] w-[18px]">
        <svg width="16" height="16" viewBox="0 0 16 16"><path d="M0 0h16v12H7l-3 3v-3H0z" fill="#fff" /><path d="M3 3h10M3 6h10M3 9h7" stroke="#333" /></svg>
        <span className="absolute left-[7px] top-[7px] flex h-[15px] w-[15px] items-center justify-center rounded-full border border-[#888] bg-[#444] text-[10px] text-white">1</span>
      </div>
    </div>
  </div>
);

const App = () => (
  <div className="flex h-[1440px] w-[2560px] flex-col overflow-hidden bg-[#a2a2a2] text-[11px] leading-none [font-family:'DejaVu_Sans',sans-serif]">
    <div className="flex h-[22px] items-center bg-white pl-[3px] text-[12px] text-black [font-family:'Open_Sans',sans-serif]">
      <UnityLogo size={15} color="#222" />
      <span className="ml-[5px] tracking-[-0.25px]">Unity 2017.4.4f1 Personal (64bit) - Main.unity - Overwork - PC, Mac &amp; Linux Standalone &lt;DX11&gt;</span>
      <div className="ml-auto flex items-center pr-[19px]">
        <svg width="11" height="11" viewBox="0 0 11 11" stroke="#222"><path d="M0 5.5h11" /></svg>
        <svg width="11" height="11" viewBox="0 0 11 11" stroke="#222" fill="none" className="ml-[34px]"><rect x="0.5" y="2.5" width="8" height="8" /><path d="M3 2.5V0.5h7.5V8H8.5" /></svg>
        <svg width="11" height="11" viewBox="0 0 11 11" stroke="#222" className="ml-[34px]"><path d="M0.5 0.5l10 10M10.5 0.5l-10 10" /></svg>
      </div>
    </div>
    <div className="flex h-[19px] items-center gap-[13px] bg-white pl-[7px] text-[12px] tracking-[-0.2px] text-black [font-family:'Open_Sans',sans-serif]">
      <span>File</span><span>Edit</span><span>Assets</span><span>GameObject</span><span>Component</span><span>Window</span><span>Help</span>
    </div>
    <div className="h-[2px] bg-[#f0f0f0]" />
    <Toolbar />
    <div className="flex h-[1303px]">
      <div className="flex w-[1314px] shrink-0 flex-col gap-[6px]">
        <SceneView />
        <GameView />
      </div>
      <div className="ml-[4px] flex w-[618px] shrink-0 flex-col gap-[5px]">
        <Hierarchy />
        <Project />
      </div>
      <div className="ml-[6px] w-[618px] shrink-0">
        <Inspector />
      </div>
    </div>
    <div className="h-[22px] bg-[#a2a2a2]" />
    <Taskbar />
  </div>
);

export default App;
